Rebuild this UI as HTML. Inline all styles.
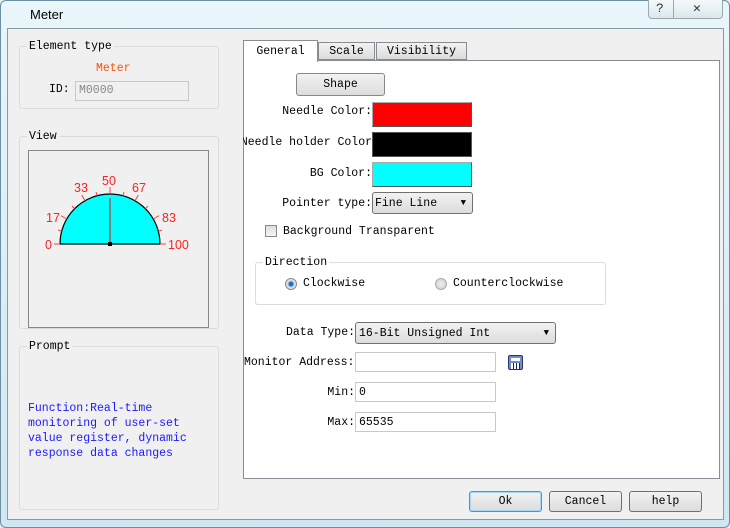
<!DOCTYPE html>
<html><head><style>
*{margin:0;padding:0;box-sizing:border-box}
body{width:730px;height:528px;background:#dfeff5;font-family:"Liberation Mono","Noto Sans CJK SC",monospace;font-size:11.5px;line-height:1.45;color:#000;position:relative;overflow:hidden}
.a{position:absolute}
.grp{position:absolute;border:1px solid #dcdcdc;border-radius:3px}
.lbl{position:absolute;background:#f0f0f0;padding:0 2px}
.in{position:absolute;background:#fff;border:1px solid #c8c8c8;height:20px;padding-left:3px;line-height:18px}
.btn{position:absolute;border:1px solid #707070;border-radius:3px;background:linear-gradient(#f2f2f2,#dcdcdc);text-align:center;line-height:19px}
.r{text-align:right}
</style></head><body>
<div class="a" style="left:0;top:0;width:730px;height:528px;border:1px solid #6e8fa3;border-radius:6px;background:linear-gradient(#e9f6fb,#cfe7f2)"></div>
<div class="a" style="left:30px;top:6px;font-family:'Liberation Sans',sans-serif;font-size:13px">Meter</div>
<div class="a" style="left:648px;top:0;width:75px;height:19px;border:1px solid #9aa;border-top:0;border-radius:0 0 4px 4px;background:linear-gradient(#f4f9fb,#dbe8ee)"></div>
<div class="a" style="left:673px;top:0;width:1px;height:19px;background:#9aa"></div>
<div class="a" style="left:656px;top:0px;font-size:13px;color:#333">?</div>
<div class="a" style="left:693px;top:0px;font-size:13px;color:#333">✕</div>
<div class="a" style="left:7px;top:28px;width:717px;height:492px;background:#f0f0f0;border:1px solid #8a9ba5"></div>

<div class="grp" style="left:19px;top:46px;width:200px;height:63px"></div>
<div class="lbl" style="left:27px;top:39px">Element type</div>
<div class="a" style="left:96px;top:61px;color:#ff5000">Meter</div>
<div class="a" style="left:49px;top:82px">ID:</div>
<div class="in" style="left:75px;top:81px;width:114px;background:#f0f0f0;color:#888">M0000</div>

<div class="grp" style="left:19px;top:136px;width:200px;height:193px"></div>
<div class="lbl" style="left:27px;top:129px">View</div>
<svg class="a" style="left:28px;top:150px" width="181" height="180">
<rect x="0.5" y="0.5" width="180" height="177" fill="#f0f0f0" stroke="#888"/>
<g transform="translate(82,94)">
<path d="M-50 0 A50 50 0 0 1 50 0 Z" fill="#00ffff" stroke="#000" stroke-width="1.2"/>
<g stroke="#ff4040" stroke-width="1">
<line x1="-50" y1="0" x2="-56" y2="0"/><line x1="50" y1="0" x2="56" y2="0"/>
<line x1="0" y1="-50" x2="0" y2="-57"/>
<line x1="-43.3" y1="-25" x2="-49" y2="-28.3"/><line x1="43.3" y1="-25" x2="49" y2="-28.3"/>
<line x1="-25" y1="-43.3" x2="-28.3" y2="-49"/><line x1="25" y1="-43.3" x2="28.3" y2="-49"/>
<line x1="-48.3" y1="-12.9" x2="-52" y2="-14"/><line x1="48.3" y1="-12.9" x2="52" y2="-14"/>
<line x1="-35.4" y1="-35.4" x2="-38" y2="-38"/><line x1="35.4" y1="-35.4" x2="38" y2="-38"/>
<line x1="-12.9" y1="-48.3" x2="-14" y2="-52"/><line x1="12.9" y1="-48.3" x2="14" y2="-52"/>
</g>
<line x1="0" y1="0" x2="0" y2="-46" stroke="#808080" stroke-width="2"/>
<rect x="-2" y="-2" width="4" height="4" fill="#000"/>
<g fill="#ff2020" font-family="Liberation Sans,sans-serif" font-size="12.5">
<text x="-65" y="5">0</text><text x="58" y="5">100</text>
<text x="-64" y="-22">17</text><text x="52" y="-22">83</text>
<text x="-36" y="-52">33</text><text x="22" y="-52">67</text>
<text x="-8" y="-59">50</text>
</g></g></svg>

<div class="grp" style="left:19px;top:346px;width:200px;height:164px"></div>
<div class="lbl" style="left:27px;top:339px">Prompt</div>
<div class="a" style="left:28px;top:401px;color:#1a1aff;line-height:15px">Function:Real-time<br>monitoring of user-set<br>value register, dynamic<br>response data changes</div>

<div class="a" style="left:243px;top:60px;width:477px;height:419px;background:#fff;border:1px solid #898c95"></div>
<div class="a" style="left:243px;top:40px;width:75px;height:22px;background:#fff;border:1px solid #898c95;border-bottom:0;text-align:center;line-height:21px">General</div>
<div class="a" style="left:318px;top:42px;width:57px;height:18px;background:linear-gradient(#f2f2f2,#dcdcdc);border:1px solid #898c95;text-align:center;line-height:18px">Scale</div>
<div class="a" style="left:376px;top:42px;width:91px;height:18px;background:linear-gradient(#f2f2f2,#dcdcdc);border:1px solid #898c95;text-align:center;line-height:18px">Visibility</div>

<div class="btn" style="left:296px;top:73px;width:89px;height:23px;border-color:#888;line-height:22px">Shape</div>
<div class="a r" style="left:243px;top:104px;width:129px">Needle Color:</div>
<div class="a" style="left:372px;top:102px;width:100px;height:25px;background:#ff0000;border:1px solid #555;border-top-color:#aaa;border-left-color:#aaa"></div>
<div class="a r" style="left:243px;top:135px;width:129px;overflow:hidden;white-space:nowrap;direction:rtl">Needle holder Color:</div>
<div class="a" style="left:372px;top:132px;width:100px;height:25px;background:#000;border:1px solid #555"></div>
<div class="a r" style="left:243px;top:166px;width:129px">BG Color:</div>
<div class="a" style="left:372px;top:162px;width:100px;height:25px;background:#00ffff;border:1px solid #555;border-top-color:#aaa;border-left-color:#aaa"></div>
<div class="a r" style="left:243px;top:196px;width:129px">Pointer type:</div>
<div class="btn" style="left:372px;top:192px;width:101px;height:22px;text-align:left;padding-left:2px;line-height:21px">Fine Line<span style="position:absolute;right:6px;font-size:9px">▼</span></div>
<div class="a" style="left:265px;top:225px;width:12px;height:12px;border:1px solid #888;background:linear-gradient(#ddd,#f5f5f5)"></div>
<div class="a" style="left:283px;top:224px">Background Transparent</div>

<div class="grp" style="left:255px;top:262px;width:351px;height:43px;background:#fff"></div>
<div class="a" style="left:263px;top:255px;background:#fff;padding:0 2px">Direction</div>
<div class="a" style="left:285px;top:278px;width:12px;height:12px;border-radius:50%;border:1px solid #888;background:radial-gradient(#1e6fc0 30%,#bcd 40%,#eee 70%)"></div>
<div class="a" style="left:303px;top:276px">Clockwise</div>
<div class="a" style="left:435px;top:278px;width:12px;height:12px;border-radius:50%;border:1px solid #aaa;background:radial-gradient(#eee,#ccc)"></div>
<div class="a" style="left:453px;top:276px">Counterclockwise</div>

<div class="a r" style="left:243px;top:325px;width:112px">Data Type:</div>
<div class="btn" style="left:355px;top:322px;width:201px;height:22px;text-align:left;padding-left:3px;line-height:21px">16-Bit Unsigned Int<span style="position:absolute;right:6px;font-size:9px">▼</span></div>
<div class="a" style="left:244px;top:355px">Monitor Address:</div>
<div class="in" style="left:355px;top:352px;width:141px"></div>
<div class="a" style="left:508px;top:355px;width:15px;height:15px;border:1px solid #335;border-radius:2px;background:#6b8fcf"><div style="margin:2px;height:3px;background:#fff"></div><div style="margin:1px 2px;height:6px;background:repeating-linear-gradient(90deg,#fff 0 2px,#224 2px 3px)"></div></div>
<div class="a r" style="left:243px;top:385px;width:112px">Min:</div>
<div class="in" style="left:355px;top:382px;width:141px;line-height:20px">0</div>
<div class="a r" style="left:243px;top:415px;width:112px">Max:</div>
<div class="in" style="left:355px;top:412px;width:141px;line-height:20px">65535</div>

<div class="btn" style="left:469px;top:491px;width:73px;height:21px;border-color:#3c9bd8;box-shadow:inset 0 0 0 1px #a6d8f5;line-height:20px">Ok</div>
<div class="btn" style="left:549px;top:491px;width:73px;height:21px;line-height:20px">Cancel</div>
<div class="btn" style="left:629px;top:491px;width:73px;height:21px;line-height:20px">help</div>
</body></html>
